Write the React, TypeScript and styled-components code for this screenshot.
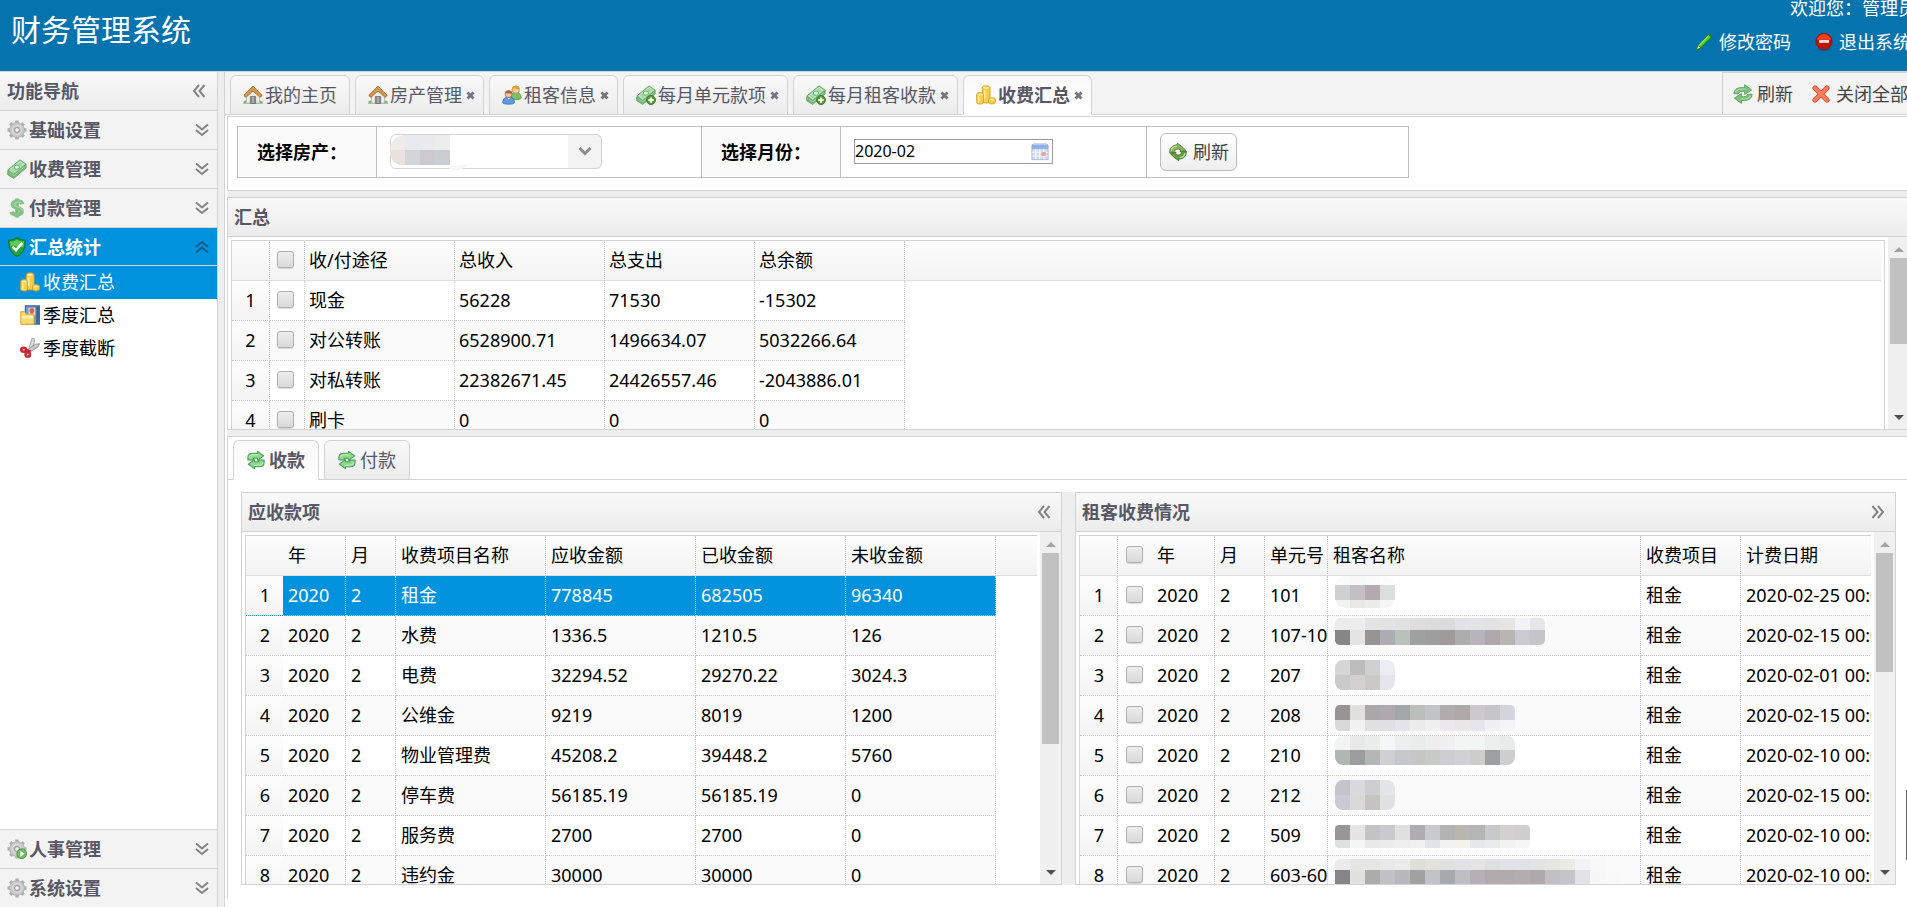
import React from 'react';
import styled, { createGlobalStyle, css } from 'styled-components';

const LINE = '#d3d3d3';
const BAR = 'linear-gradient(#f9f9f9, #ececec)';
const INK = '#575765';
const BLUE = '#0092dc';

const GlobalStyle = createGlobalStyle`
  * { box-sizing: border-box; }
  html, body { margin: 0; height: 100%; overflow: hidden; }
  body, button, input, select {
    font-family: 'Noto Sans', 'Noto Sans CJK SC', sans-serif;
    font-size: 18px;
    line-height: 24px;
    color: #000;
  }
  #root { height: 100%; }
`;

/* ---------- icons ---------- */

type IconName =
  | 'home' | 'users' | 'money' | 'moneyAdd' | 'coins' | 'gear' | 'gearPlay' | 'dollar'
  | 'shield' | 'album' | 'scissors' | 'reload' | 'recycle' | 'sync' | 'cancel'
  | 'pencil' | 'stop' | 'calendar';

const Gear = () => (
  <>
    <g stroke="#b0b0b0" strokeWidth="2.8">
      {[0, 45, 90, 135].map((a) => (
        <path key={a} d="M8 .4V15.600" transform={`rotate(${a} 8 8)`} />
      ))}
    </g>
    <circle cx="8" cy="8" r="5.900" fill="#cbcbcb" stroke="#a9a9a9" strokeWidth=".6" />
    <circle cx="8" cy="8" r="3.500" fill="#bdbdbd" stroke="#dedede" strokeWidth="1" />
    <circle cx="8" cy="8" r="1.900" fill="#f3f3f3" stroke="#999" strokeWidth=".8" />
  </>
);

const Note = () => (
  <>
    <path d="M.6 9.400v3.200l4.800 2.900 9.900-8.300V4.100z" fill="#79b97d" stroke="#62a769" strokeWidth=".7" />
    <path d="M.6 8.800 10.400.7l4.900 3.400-9.900 8.300z" fill="#a3d6a3" stroke="#62a769" strokeWidth=".8" />
    <path d="M2.400 8.800 10.500 2.100l2.900 2-8.100 6.800z" fill="none" stroke="#c9eac8" strokeWidth=".8" />
    <ellipse cx="7.900" cy="6.500" rx="2.100" ry="1.700" fill="#dcf3da" stroke="#62a769" strokeWidth=".7" />
    <path d="M2.500 11.500 5.500 13.400 14 6.400" fill="none" stroke="#a9d8a9" strokeWidth=".7" />
  </>
);

const drawings: Record<IconName, React.ReactNode> = {
  home: (
    <>
      <path d="M.3 13.200c2-1.600 13.400-1.600 15.400 0v1.800H.3z" fill="#7dbb5f" />
      <path d="M2.800 8 8 3l5.200 5v6.500H2.800z" fill="#ececec" stroke="#b3b3b3" strokeWidth=".7" />
      <path d="M5.900 9.200h4.200v5.600H5.900z" fill="#8b8b8b" stroke="#6d6d6d" strokeWidth=".6" />
      <path d="M8 9.400v5" stroke="#c9c9c9" strokeWidth=".8" />
      <path d="M.6 8.300 8 1l7.400 7.300-1.700 1.500L8 4.800 2.300 9.800z" fill="#d49a4c" stroke="#a56f2c" strokeWidth=".8" strokeLinejoin="round" />
    </>
  ),
  users: (
    <>
      <path d="M7 10.500c0-3.500 1.500-4.500 4-4.500s4.300 1.200 4.300 4.300c0 .9-2 1.400-4.300 1.400z" fill="#7cc265" stroke="#569a44" strokeWidth=".7" />
      <circle cx="11" cy="3.700" r="2.900" fill="#f7cfa4" stroke="#c98b3c" strokeWidth=".7" />
      <path d="M8 3.300C8.200.2 13.800.2 14 3.300c-2 .2-4-.8-6 0z" fill="#e6a021" />
      <path d="M.7 14.200c0-3.500 1.800-4.700 4.600-4.700s4.600 1.200 4.600 4.700c0 1.500-9.200 1.500-9.200 0z" fill="#5e9be0" stroke="#3971bd" strokeWidth=".7" />
      <path d="M4 10l1.400 1.600L6.800 10z" fill="#fff" />
      <circle cx="5.300" cy="7.200" r="2.800" fill="#f5c9a0" stroke="#a7683f" strokeWidth=".7" />
      <path d="M2.400 7C2.500 3.700 8.100 3.700 8.200 7c-2 0-3.800-1-5.800 0z" fill="#a8593a" />
    </>
  ),
  money: <Note />,
  moneyAdd: (
    <>
      <Note />
      <circle cx="12" cy="12" r="3.600" fill="#5d9a3c" stroke="#3f7a25" strokeWidth=".8" />
      <path d="M12 9.900v4.200M9.900 12h4.200" stroke="#fff" strokeWidth="1.500" />
    </>
  ),
  coins: (
    <>
      <g fill="#f6cf4c" stroke="#dba01c" strokeWidth=".8">
        <path d="M5 2.200c0-2 6.200-2 6.200 0V13c0 1.800-6.200 1.800-6.200 0z" />
        <path d="M.6 7.400c0-1.700 5.400-1.700 5.400 0v6.400c0 1.900-5.400 1.900-5.400 0z" />
        <path d="M10 11.400c0-1.500 5.500-1.500 5.500 0v2.200c0 2-5.500 2-5.500 0z" />
      </g>
      <g fill="#fdeea6">
        <ellipse cx="8.100" cy="2.200" rx="2.300" ry=".9" />
        <ellipse cx="3.300" cy="7.500" rx="2" ry=".8" />
        <ellipse cx="12.700" cy="11.500" rx="2" ry=".7" />
        <path d="M1.500 9h1.300v5H1.500zM6.300 4.200h1.200v7H6.300z" />
      </g>
    </>
  ),
  gear: <Gear />,
  gearPlay: (
    <>
      <Gear />
      <circle cx="11.800" cy="11.800" r="3.900" fill="#74bd68" stroke="#4b9343" strokeWidth=".8" />
      <path d="M10.700 9.500 14 11.800l-3.300 2.300z" fill="#fff" />
    </>
  ),
  dollar: (
    <>
      <path d="M8 .3v15.400" stroke="#82bd80" strokeWidth="2.800" />
      <path d="M12.300 5C11.500 1.900 4.600 2 4.600 5.200c0 3.300 7.200 1.900 7.200 5.500 0 3.400-7.300 3.400-8.100.3" fill="none" stroke="#86c285" strokeWidth="3.400" />
      <path d="M11.500 4.200C10 2.700 5.500 3 5.500 5.200c0 2.300 7.200 1.900 7.200 5.500" fill="none" stroke="#b2deae" strokeWidth=".8" />
    </>
  ),
  shield: (
    <>
      <path d="M8 .6c2 1.700 4.300 2.100 6.600 2 .4 6.200-1.500 10.300-6.600 12.900C2.900 12.900 1 8.800 1.400 2.600 3.700 2.700 6 2.300 8 .6z" fill="#20a73a" stroke="#0d7a2c" strokeWidth=".9" />
      <path d="M8 1.900c1.800 1.300 3.600 1.700 5.500 1.700.1 2-.1 3.500-.5 4.800L2.900 6.700 2.500 3.600C4.400 3.600 6.200 3.200 8 1.900z" fill="#5ccc59" />
      <path d="M4.300 7.700 7.200 10.600 12.200 4.600" fill="none" stroke="#fff" strokeWidth="2" />
    </>
  ),
  album: (
    <>
      <path d="M4.300.7h11.200v14.600H4.300z" fill="#6f9bd1" stroke="#3c6399" strokeWidth=".9" />
      <path d="M13 1.200h2v13.600h-2z" fill="#40618f" />
      <path d="M6.800 2.300h5.400v6H6.800z" fill="#c9dbef" />
      <path d="M7.600 3.600C8 2.300 11 2.300 11.400 3.600c.3 2-1 3-1.900 3.900-.9-.9-2.200-1.900-1.900-3.900z" fill="#ec5a51" />
      <path d="M.6 5.300h3.200l1 2h6.400v8.100H.6z" fill="#f8d96e" stroke="#d7a83a" strokeWidth=".8" />
      <path d="M1.400 8.600h9v2.200h-9z" fill="#fdf1ba" />
    </>
  ),
  scissors: (
    <>
      <path d="M6.600 10.400 9.500.5h1.900v3.200L9.300 10z" fill="#dedede" stroke="#979797" strokeWidth=".7" />
      <path d="M6.200 9.300 12.300 5l3.300-.5-.9 2.300-6.900 4.600z" fill="#c9c9c9" stroke="#8f8f8f" strokeWidth=".7" />
      <ellipse cx="2.900" cy="9.300" rx="2" ry="1.600" fill="#f2c7c7" stroke="#cb2a35" strokeWidth="2" />
      <ellipse cx="6.200" cy="13.200" rx="1.800" ry="1.800" fill="#f2c7c7" stroke="#cb2a35" strokeWidth="2" />
      <path d="M4.800 9.600 7.800 10.200 6.800 11.600" stroke="#b3232d" strokeWidth="1.400" />
    </>
  ),
  reload: (
    <>
      <path d="M.7 7.800C1 3.900 4 2.300 9.300 3V.5L15 4.700 9.300 8.400V6C6.500 5.500 4.800 6 4.200 7.800z" fill="#79c07a" stroke="#5a9f60" strokeWidth=".7" />
      <path d="M15.300 8.200C15 12.100 12 13.700 6.700 13v2.500L1 11.300l5.700-3.700V10c2.800.5 4.500 0 5.100-1.800z" fill="#79c07a" stroke="#5a9f60" strokeWidth=".7" />
      <path d="M2 6.700C3 4.200 6 3.600 10 4.200M14 9.300c-1 2.500-4 3.100-8 2.500" fill="none" stroke="#b3dfae" strokeWidth=".9" />
    </>
  ),
  recycle: (
    <>
      <g id="recycle-arm">
        <path d="M.6 8.600C.4 4.300 3.200 1.700 7.200 1.700L7.400.3l4 2.800L15 6.700l-5.400 1 .3-1.700C7.500 4.600 5 5.400 5 8.300z" fill="#86b25e" stroke="#4f7f31" strokeWidth=".8" strokeLinejoin="round" />
      </g>
      <path d="M15.400 7.400c.2 4.300-2.600 6.900-6.600 6.900l-.2 1.400-4-2.800L1 9.300l5.400-1L6.100 10c2.400 1.400 4.900.6 4.900-2.300z" fill="#6a9c45" stroke="#46752b" strokeWidth=".8" strokeLinejoin="round" />
      <path d="M2 7c.2-2.300 2.200-4 5-4M9.500 13c2.500-.1 4.300-1.500 4.500-4" fill="none" stroke="#c3dfa8" strokeWidth="1" />
      <path d="M6.600 9.300 9.500 6.600" stroke="#f4f8ef" strokeWidth="1.200" />
    </>
  ),
  sync: (
    <>
      <path d="M.8 7.900V5.500C.8 3 2.600 1.900 5.500 1.900h3.800V.3l5.600 4-5.600 4V6.400H6.600c-1.200 0-1.400.8-.6 1.700z" fill="#86dc82" stroke="#4f9565" strokeWidth=".9" strokeLinejoin="round" />
      <path d="M15.200 8.100v2.400c0 2.500-1.800 3.600-4.700 3.600H6.700v1.600l-5.600-4 5.600-4v1.900h2.700c1.200 0 1.400-.8.600-1.700z" fill="#86dc82" stroke="#4f9565" strokeWidth=".9" strokeLinejoin="round" />
      <path d="M2.200 5.800c.2-2 1.600-2.500 4-2.500h4M13.800 10.200c-.2 2-1.600 2.500-4 2.500h-4" fill="none" stroke="#c6f5be" strokeWidth=".9" />
    </>
  ),
  cancel: (
    <>
      <path d="M2.700 2.700 13.300 13.300M13.300 2.700 2.700 13.300" stroke="#e04b2f" strokeWidth="4.600" strokeLinecap="round" />
      <path d="M2.700 2.700 13.300 13.300M13.300 2.700 2.700 13.300" stroke="#fb7d5e" strokeWidth="3" strokeLinecap="round" />
    </>
  ),
  pencil: (
    <>
      <path d="M.3 15.700 2.300 11 12 1.300C13.500-.2 16.300 2.500 14.800 4L5 13.800z" fill="#1f7d12" />
      <path d="M3.600 11.200 12.500 2.300 14 3.800 5 12.700z" fill="#52d022" />
      <path d="M3.400 11.300 12.200 2.400" stroke="#a6f07a" strokeWidth="1" />
      <path d="M1.700 14.300 2.900 11.500 4.700 13.200z" fill="#f4f0c8" />
    </>
  ),
  stop: (
    <>
      <ellipse cx="8" cy="14.600" rx="6" ry="1.300" fill="#0b4f7c" opacity=".6" />
      <circle cx="8" cy="7.500" r="7.200" fill="#c41407" stroke="#7c1a14" strokeWidth=".8" />
      <path d="M1.800 6C2.500 3 5 1.200 8 1.200S13.500 3 14.200 6z" fill="#f03c20" />
      <path d="M3.600 6.200h8.800v2.600H3.600z" fill="#f3dcd8" />
    </>
  ),
  calendar: (
    <>
      <path d="M.8 1.800 2 .8h12l1.200 1v13H.8z" fill="#cfdaf0" stroke="#a9b8d3" strokeWidth=".8" />
      <path d="M.8 1.700h14.400v3.500H.8z" fill="#8fadea" />
      <path d="M1 8.200h14M1 11.500h14M4.300 5.500v9M7.800 5.500v9M11.300 5.500v9" stroke="#f7fafe" strokeWidth="1" />
      <path d="M9.200 8h3.800v3.600H9.200z" fill="#eea498" />
    </>
  ),
};

const Svg = styled.svg<{ $size: number }>`
  width: ${(p) => p.$size}px;
  height: ${(p) => p.$size}px;
  flex: none;
  display: block;
`;

const Icon = ({ name, size = 20 }: { name: IconName; size?: number }) => (
  <Svg $size={size} viewBox="0 0 16 16" fill="none" aria-hidden="true">
    {drawings[name]}
  </Svg>
);

type Dir = 'left' | 'right' | 'up' | 'down';
const turn: Record<Dir, number> = { left: 0, up: 90, right: 180, down: 270 };

const Chevrons = ({ dir, color = '#848484' }: { dir: Dir; color?: string }) => (
  <Svg $size={14} viewBox="0 0 14 14" fill="none" aria-hidden="true">
    <path
      d="M7 1 2 7 7 13M12.500 1 7.500 7l5 6"
      stroke={color}
      strokeWidth="2"
      transform={`rotate(${turn[dir]} 7 7)`}
    />
  </Svg>
);

/* ---------- page frame ---------- */

const Window = styled.div`
  position: relative;
  height: 100vh;
  overflow: hidden;
  background: #fff;
`;

const Frame = styled.div`
  display: flex;
  flex-direction: column;
  height: 100%;
  margin-right: -2px;
`;

const EdgeMark = styled.div`
  position: absolute;
  right: 0;
  bottom: 47px;
  width: 1px;
  height: 70px;
  background: #666;
`;

const Header = styled.header`
  flex: none;
  display: flex;
  justify-content: space-between;
  height: 72px;
  background: #0573ae;
  border-bottom: 1px solid ${LINE};
  color: #fff;
`;

const Title = styled.h1`
  margin: 0;
  padding: 10px 0 0 11px;
  font-size: 30px;
  line-height: 40px;
  font-weight: 400;
`;

const Account = styled.div`
  flex: none;
  width: 214px;
  white-space: nowrap;
`;

const Welcome = styled.div`
  padding-left: 95px;
  height: 30px;
  line-height: 16px;
`;

const Links = styled.nav`
  display: flex;
  gap: 24px;
`;

const HeaderLink = styled.a`
  display: flex;
  align-items: center;
  gap: 6px;
  flex: none;
  color: #fff;
  text-decoration: none;
`;

const Body = styled.div`
  flex: 1;
  min-height: 0;
  display: flex;
`;

/* ---------- sidebar ---------- */

const Sidebar = styled.aside`
  flex: none;
  width: 218px;
  display: flex;
  flex-direction: column;
  border-right: 1px solid ${LINE};
`;

const Splitter = styled.div`
  flex: none;
  width: 6px;
  background: #eee;
`;

const barStyle = css`
  flex: none;
  display: flex;
  align-items: center;
  justify-content: space-between;
  height: 39px;
  font-size: 18px;
  font-weight: 700;
  color: ${INK};
  border-bottom: 1px solid ${LINE};
`;

const NavTitle = styled.div`
  ${barStyle}
  padding: 0 11px 0 7px;
  background: ${BAR};
`;

const Section = styled.button<{ $open?: boolean; $above?: boolean }>`
  ${barStyle}
  width: 100%;
  padding: 0 8px 0 7px;
  border: 0 solid ${LINE};
  border-bottom-width: ${(p) => (p.$above ? 0 : 1)}px;
  border-top-width: ${(p) => (p.$above ? 1 : 0)}px;
  background: #f3f3f3;
  cursor: pointer;
  ${(p) => p.$open && css`height: 38px; background: ${BLUE}; color: #fff;`}
`;

const Caption = styled.span`
  display: flex;
  align-items: center;
  gap: 2px;
`;

const Tree = styled.ul`
  flex: 1;
  margin: 0;
  padding: 0;
  list-style: none;
`;

const Leaf = styled.a<{ $on?: boolean }>`
  display: flex;
  align-items: center;
  gap: 3px;
  height: 33px;
  padding: 0 0 2px 20px;
  text-decoration: none;
  color: ${(p) => (p.$on ? '#fff' : '#000')};
  background: ${(p) => (p.$on ? BLUE : 'transparent')};
`;

/* ---------- tabs ---------- */

const Main = styled.main`
  flex: 1;
  min-width: 0;
  display: flex;
  flex-direction: column;
  border-left: 1px solid ${LINE};
`;

const TabStrip = styled.div<{ $plain?: boolean }>`
  flex: none;
  display: flex;
  align-items: flex-end;
  height: 43px;
  padding-left: 5px;
  background: ${(p) => (p.$plain ? '#fff' : '#f3f3f3')};
  box-shadow: inset 0 -1px ${LINE};
`;

const TabList = styled.div`
  flex: 1;
  display: flex;
  gap: 5px;
`;

const Tab = styled.div<{ $on?: boolean; $pad?: number }>`
  display: flex;
  align-items: center;
  gap: 4px;
  height: 40px;
  padding: 0 ${(p) => p.$pad ?? 12}px;
  border: 1px solid ${LINE};
  border-radius: 6px 6px 0 0;
  background: ${BAR};
  ${(p) =>
    p.$on &&
    css`
      background: linear-gradient(#f9f9f9, #fff);
      border-bottom-color: #fff;
    `}
`;

const TabButton = styled.button<{ $on?: boolean; $gap?: number }>`
  display: flex;
  align-items: center;
  gap: ${(p) => p.$gap ?? 2}px;
  padding: 0;
  border: 0;
  background: none;
  color: ${INK};
  font-weight: ${(p) => (p.$on ? 700 : 400)};
  white-space: nowrap;
  cursor: pointer;
`;

const CloseButton = styled.button`
  display: block;
  padding: 0;
  margin-right: -4px;
  border: 0;
  background: none;
  cursor: pointer;
`;

const TabTools = styled.div`
  flex: none;
  align-self: stretch;
  display: flex;
  align-items: center;
  gap: 19px;
  width: 187px;
  padding-left: 10px;
  border: 1px solid ${LINE};
`;

const ToolButton = styled.button<{ $gap: number }>`
  display: flex;
  align-items: center;
  gap: ${(p) => p.$gap}px;
  flex: none;
  padding: 0;
  border: 0;
  background: none;
  color: #444;
  white-space: nowrap;
  cursor: pointer;
`;

const Page = styled.div`
  flex: 1;
  min-height: 0;
  display: flex;
  flex-direction: column;
  padding: 1px 0 8px 2px;
`;

/* ---------- filter form ---------- */

const FilterPanel = styled.section`
  flex: none;
  height: 75px;
  padding: 9px;
  border: 1px solid ${LINE};
`;

const FilterForm = styled.form`
  display: grid;
  grid-template-columns: 138px 325px 139px 306px 262px;
  width: max-content;
  height: 52px;
  border: 1px solid #bfbfbf;
`;

const FilterLabel = styled.label`
  display: flex;
  align-items: center;
  padding-left: 19px;
  background: #fafafa;
  font-weight: 700;
  & + div { border-left: 1px solid #bfbfbf; }
  div + & { border-left: 1px solid #bfbfbf; }
`;

const FilterCell = styled.div`
  display: flex;
  align-items: center;
  padding: 0 0 1px 13px;
  & + & { border-left: 1px solid #bfbfbf; }
`;

const SelectBox = styled.div`
  position: relative;
  width: 212px;
  height: 35px;
`;

const Select = styled.select`
  appearance: none;
  width: 100%;
  height: 100%;
  border: 1px solid ${LINE};
  border-radius: 6px;
  background: linear-gradient(to left, #f3f3f3 33px, #fff 33px);
`;

const SelectArrow = styled.svg`
  position: absolute;
  right: 10px;
  top: 12px;
  width: 14px;
  height: 10px;
  pointer-events: none;
`;

const SelectMask = styled.svg`
  position: absolute;
  left: 0;
  top: 1px;
  width: 80px;
  height: 36px;
  pointer-events: none;
`;

const MonthBox = styled.div`
  display: flex;
  align-items: center;
  width: 199px;
  height: 25px;
  padding-right: 3px;
  border: 1px solid #999;
`;

const MonthInput = styled.input`
  flex: 1;
  min-width: 0;
  height: 100%;
  padding: 0 0 2px;
  border: 0;
  outline: 0;
  background: none;
  font-size: 16px;
`;

const RefreshButton = styled.button`
  display: flex;
  align-items: center;
  gap: 6px;
  height: 38px;
  padding: 0 7px 0 8px;
  border: 1px solid #bbb;
  border-radius: 6px;
  background: linear-gradient(#fff, #eee);
  color: #444;
  cursor: pointer;
`;

/* ---------- panels ---------- */

const HSplit = styled.div`
  flex: none;
  height: 6px;
  background: #eee;
`;

const PanelTitle = styled.h2`
  ${barStyle}
  height: 39px;
  margin: 0;
  padding: 0 10px 0 6px;
  background: ${BAR};
`;

const SummaryPanel = styled.section`
  flex: none;
  display: flex;
  flex-direction: column;
  height: 233px;
  border: 1px solid ${LINE};
  border-right: 0;
`;

const PanelBody = styled.div`
  flex: 1;
  min-height: 0;
  display: flex;
`;

const GridBox = styled.div<{ $closed?: boolean }>`
  flex: 1;
  min-width: 0;
  margin: 3px 3px 0 3px;
  overflow: hidden;
  border: solid ${LINE};
  border-width: 1px ${(p) => (p.$closed ? 1 : 0)}px 0 1px;
  padding-right: ${(p) => (p.$closed ? 3 : 0)}px;
`;

const PlainButton = styled.button`
  padding: 0;
  border: 0;
  background: none;
  cursor: pointer;
`;

const Scroll = styled.div`
  flex: none;
  display: flex;
  flex-direction: column;
  justify-content: space-between;
  width: 21px;
  background: #f0f0f0;
`;

const ScrollButton = styled.button<{ $low?: boolean }>`
  display: flex;
  align-items: center;
  justify-content: center;
  width: 21px;
  height: 21px;
  padding: ${(p) => (p.$low ? '0 0 3px' : '4px 0 0')};
  border: 0;
  background: none;
`;

const Thumb = styled.div<{ $size: number }>`
  width: 17px;
  height: ${(p) => p.$size}px;
  margin: 0 2px;
  background: #c1c1c1;
`;

const ScrollBar = ({ thumb }: { thumb: number }) => (
  <Scroll>
    <div>
      <ScrollButton type="button" aria-label="向上滚动">
        <svg width="10" height="5" viewBox="0 0 10 5"><path d="M0 5 5 0l5 5z" fill="#a3a3a3" /></svg>
      </ScrollButton>
      <Thumb $size={thumb} />
    </div>
    <ScrollButton type="button" $low aria-label="向下滚动">
      <svg width="10" height="5" viewBox="0 0 10 5"><path d="M0 0h10L5 5z" fill="#505050" /></svg>
    </ScrollButton>
  </Scroll>
);

/* ---------- data grid ---------- */

const DataTable = styled.table<{ $width?: number; $indent: number }>`
  --indent: ${(p) => p.$indent}px;
  table-layout: fixed;
  border-collapse: separate;
  border-spacing: 0;
  width: ${(p) => (p.$width ? `${p.$width}px` : '100%')};
`;

const cellStyle = css`
  height: 40px;
  padding: 0 4px 2px var(--indent);
  overflow: hidden;
  text-align: left;
  font-weight: 400;
  white-space: nowrap;
`;

const HeadCell = styled.th<{ $line?: boolean }>`
  ${cellStyle}
  background: linear-gradient(#fdfdfd, #f3f3f3);
  border-bottom: 1px solid #ddd;
  border-right: ${(p) => (p.$line === false ? 0 : '1px dotted #ccc')};
`;

const Cell = styled.td<{ $line?: boolean; $flush?: boolean }>`
  ${cellStyle}
  border-bottom: 1px dotted #ccc;
  border-right: ${(p) => (p.$line === false ? 0 : '1px dotted #ccc')};
  ${(p) => p.$flush && css`padding: 0;`}
`;

const NumberCell = styled(Cell)`
  background: linear-gradient(to bottom, #fdfdfd, #f4f4f4);
  text-align: center;
`;

const Row = styled.tr<{ $on?: boolean }>`
  &:nth-child(even) > ${Cell} { background-color: #fafafa; }
  ${(p) =>
    p.$on &&
    css`
      & > ${Cell}:not(:first-child) { background: ${BLUE}; color: #fff; }
      & > td:first-child { border-bottom-color: ${BLUE}; }
    `}
`;

const Filler = styled.td`
  padding: 0;
`;

const Check = styled.input`
  appearance: none;
  display: block;
  width: 17px;
  height: 17px;
  margin: 0 0 0 3px;
  border: 1px solid #b0b0b0;
  border-radius: 3px;
  background: linear-gradient(#ededed, #d9d9d9);
  box-shadow: 0 1px 1px rgba(0, 0, 0, 0.15);
`;

/* ---------- lower area ---------- */

const Lower = styled.section`
  flex: 1;
  min-height: 0;
  display: flex;
  flex-direction: column;
  border-left: 1px solid ${LINE};
  border-top: 1px solid ${LINE};
`;

const Columns = styled.div`
  flex: 1;
  min-height: 0;
  display: flex;
  margin: 12px 13px 14px;
  gap: 13px;
  background: #eee;
`;

const Panel = styled.section`
  flex: 1;
  min-width: 0;
  display: flex;
  flex-direction: column;
  border: 1px solid ${LINE};
  background: #fff;
`;

/* ---------- masked tenant names ---------- */

type Band = { y: number; h: number; c: string[] };
type MaskData = { r: number; bands: Band[] };

const BLOCK = 15;

const masks: MaskData[] = [
  { r: 10, bands: [
    { y: 0, h: 9, c: ['#fafafa', '#f8f8f8', '#fafafa', '#fcfcfc'] },
    { y: 9, h: 15, c: ['#cfd1d0', '#c3c0c4', '#b3abaf', '#dcdedc'] },
    { y: 24, h: 8, c: ['#f2f2f0', '#e8e8e6', '#ececea', '#f6f6f6'] },
  ] },
  { r: 5, bands: [
    { y: 2, h: 12, c: ['#ebebeb', '#ececec', '#e4e4e4', '#e3e3e3', '#e1e1e2', '#dededf', '#dcdcdd', '#dbdbdc', '#e3e3e5', '#e4e4e6', '#e3e3e4', '#e5e5e5', '#f1f2f5', '#e6e6e8'] },
    { y: 14, h: 15, c: ['#868686', '#e4e4e2', '#979593', '#afadb4', '#bac0ba', '#9fa0a1', '#9f9e9e', '#9e9b9b', '#adadad', '#b7b4bb', '#aea7ab', '#b8b5b3', '#cacbd0', '#c4c4ca'] },
  ] },
  { r: 8, bands: [
    { y: 4, h: 15, c: ['#d6d6d6', '#bebcbb', '#cfd1d0', '#eceef1'] },
    { y: 19, h: 15, c: ['#c9cac9', '#d2d1d0', '#cac9c8', '#e3e6ec'] },
  ] },
  { r: 5, bands: [
    { y: 9, h: 15, c: ['#989495', '#e0e0df', '#aaa7a8', '#aea9ac', '#a3a7a8', '#babfbc', '#c2c4c5', '#b1abae', '#aea9a8', '#cbc9cb', '#c6c6c9', '#d5d6dd'] },
    { y: 24, h: 11, c: ['#d8dad9', '#f1f1f2', '#e0e0e1', '#e0dfe1', '#e4e5e6', '#eaeeeb', '#f0f0f0', '#ebe7ea', '#e9e6e7', '#e6e5e9', '#eff0f3', '#f5f5f7'] },
  ] },
  { r: 8, bands: [
    { y: 0, h: 14, c: ['#f2f4f3', '#e8e8e8', '#ebecec', '#f5f6f6', '#edeeee', '#ebecec', '#eeeeef', '#f0f0f0', '#f3f5f4', '#f3f5f4', '#edefee', '#e9ebea'] },
    { y: 14, h: 15, c: ['#b0b6b2', '#9d9c9e', '#b4b8b5', '#d0cfd4', '#c6c7ca', '#c6c6c6', '#c8cac8', '#cdcdd2', '#d0d0d5', '#cecdca', '#9e9fa0', '#cdd0cf'] },
  ] },
  { r: 8, bands: [
    { y: 4, h: 15, c: ['#c5c4ca', '#dadadc', '#cdcecd', '#e4e5e6'] },
    { y: 19, h: 15, c: ['#c8cbd2', '#d9d9da', '#c5c3c0', '#e0e1e3'] },
  ] },
  { r: 4, bands: [
    { y: 9, h: 15, c: ['#9a9697', '#e5e5e4', '#c4c4c4', '#c8cacf', '#e0e0e0', '#b1acaf', '#c8cacf', '#b3b3b1', '#b7b6af', '#b2b6b5', '#c7c9cb', '#d2d1cd', '#d0cfce'] },
    { y: 24, h: 8, c: ['#dfe1e0', '#f4f6f5', '#e9e9e9', '#ececec', '#efeff0', '#f1f1f1', '#e2e3e8', '#f2f2f2', '#f3f3eb', '#e4e8ea', '#eaebeb', '#f2f2f2', '#f6f6f6'] },
  ] },
  { r: 5, bands: [
    { y: 3, h: 11, c: ['#ebebeb', '#e6e6e5', '#e6e6e5', '#e8e8e8', '#eaebea', '#dededb', '#e1e1de', '#e0e0df', '#e2e2e5', '#e4e4e4', '#dfdfe0', '#e1e2e3', '#e1e2e6', '#e4e4e4', '#e6e6e3', '#eaeae7', '#f2f3f7', '#f8f8f8', '#fafafa'] },
    { y: 14, h: 20, c: ['#868487', '#e1e2df', '#adada7', '#bfc1c6', '#b9b9bb', '#9fa2a0', '#c2c3c7', '#a6aaad', '#bebfc3', '#b4b0b3', '#b1abad', '#b0abac', '#b3adae', '#afa9ab', '#c1c1c5', '#c5c5c7', '#e2e2e8', '#f7f7f7', '#f9f9f9'] },
  ] },
];

const MaskSvg = styled.svg`
  display: block;
  width: 290px;
  height: 39px;
  margin-left: 7px;
`;

const Mask = ({ index }: { index: number }) => {
  const { r, bands } = masks[index];
  const top = bands[0].y;
  const last = bands[bands.length - 1];
  const id = `mask-${index}`;
  return (
    <MaskSvg role="img" aria-label="已遮盖">
      <clipPath id={id}>
        <rect x="0" y={top} width={bands[0].c.length * BLOCK} height={last.y + last.h - top} rx={r} />
      </clipPath>
      <g clipPath={`url(#${id})`} shapeRendering="crispEdges">
        {bands.map((b) =>
          b.c.map((c, i) => <rect key={`${b.y}-${i}`} x={i * BLOCK} y={b.y} width={BLOCK} height={b.h} fill={c} />),
        )}
      </g>
    </MaskSvg>
  );
};

/* ---------- data ---------- */

const topSections: { icon: IconName; text: string; open?: boolean }[] = [
  { icon: 'gear', text: '基础设置' },
  { icon: 'money', text: '收费管理' },
  { icon: 'dollar', text: '付款管理' },
  { icon: 'shield', text: '汇总统计', open: true },
];

const leaves: { icon: IconName; text: string; on?: boolean }[] = [
  { icon: 'coins', text: '收费汇总', on: true },
  { icon: 'album', text: '季度汇总' },
  { icon: 'scissors', text: '季度截断' },
];

const tabs: { icon: IconName; text: string; fixed?: boolean; on?: boolean }[] = [
  { icon: 'home', text: '我的主页', fixed: true },
  { icon: 'home', text: '房产管理' },
  { icon: 'users', text: '租客信息' },
  { icon: 'moneyAdd', text: '每月单元款项' },
  { icon: 'moneyAdd', text: '每月租客收款' },
  { icon: 'coins', text: '收费汇总', on: true },
];

const summary = [
  ['现金', '56228', '71530', '-15302'],
  ['对公转账', '6528900.71', '1496634.07', '5032266.64'],
  ['对私转账', '22382671.45', '24426557.46', '-2043886.01'],
  ['刷卡', '0', '0', '0'],
];

const receivable = [
  ['租金', '778845', '682505', '96340'],
  ['水费', '1336.5', '1210.5', '126'],
  ['电费', '32294.52', '29270.22', '3024.3'],
  ['公维金', '9219', '8019', '1200'],
  ['物业管理费', '45208.2', '39448.2', '5760'],
  ['停车费', '56185.19', '56185.19', '0'],
  ['服务费', '2700', '2700', '0'],
  ['违约金', '30000', '30000', '0'],
];

const tenants = [
  ['101', '2020-02-25 00:00:00'],
  ['107-108', '2020-02-15 00:00:00'],
  ['207', '2020-02-01 00:00:00'],
  ['208', '2020-02-15 00:00:00'],
  ['210', '2020-02-10 00:00:00'],
  ['212', '2020-02-15 00:00:00'],
  ['509', '2020-02-10 00:00:00'],
  ['603-605', '2020-02-10 00:00:00'],
];

const Cols = ({ widths, fill }: { widths: number[]; fill?: boolean }) => (
  <colgroup>
    {widths.map((w, i) => <col key={i} width={w} />)}
    {fill && <col />}
  </colgroup>
);

const SummaryTable = () => (
  <DataTable $indent={4}>
    <Cols widths={[38, 35, 150, 150, 150, 150]} fill />
    <thead>
      <tr>
        <HeadCell />
        <HeadCell><Check type="checkbox" aria-label="全选" /></HeadCell>
        {['收/付途径', '总收入', '总支出', '总余额'].map((t) => <HeadCell key={t} scope="col">{t}</HeadCell>)}
        <HeadCell $line={false} />
      </tr>
    </thead>
    <tbody>
      {summary.map((row, i) => (
        <Row key={row[0]}>
          <NumberCell>{i + 1}</NumberCell>
          <Cell><Check type="checkbox" aria-label={`选择${row[0]}`} /></Cell>
          {row.map((v, j) => <Cell key={j}>{v}</Cell>)}
          <Filler />
        </Row>
      ))}
    </tbody>
  </DataTable>
);

const ReceivableTable = () => (
  <DataTable $indent={5}>
    <Cols widths={[37, 63, 50, 150, 150, 150, 150]} fill />
    <thead>
      <tr>
        <HeadCell $line={false} />
        {['年', '月', '收费项目名称', '应收金额', '已收金额', '未收金额'].map((t) => (
          <HeadCell key={t} scope="col">{t}</HeadCell>
        ))}
        <HeadCell $line={false} />
      </tr>
    </thead>
    <tbody>
      {receivable.map((row, i) => (
        <Row key={row[0]} $on={i === 0}>
          <NumberCell $line={false}>{i + 1}</NumberCell>
          <Cell>2020</Cell>
          <Cell>2</Cell>
          {row.map((v, j) => <Cell key={j}>{v}</Cell>)}
          <Filler />
        </Row>
      ))}
    </tbody>
  </DataTable>
);

const TenantTable = () => (
  <DataTable $width={1000} $indent={5}>
    <Cols widths={[38, 34, 63, 50, 63, 313, 100, 339]} />
    <thead>
      <tr>
        <HeadCell />
        <HeadCell $line={false}><Check type="checkbox" aria-label="全选" /></HeadCell>
        {['年', '月', '单元号', '租客名称', '收费项目', '计费日期'].map((t) => (
          <HeadCell key={t} scope="col">{t}</HeadCell>
        ))}
      </tr>
    </thead>
    <tbody>
      {tenants.map(([unit, date], i) => (
        <Row key={unit}>
          <NumberCell>{i + 1}</NumberCell>
          <Cell $line={false}><Check type="checkbox" aria-label={`选择${unit}`} /></Cell>
          <Cell>2020</Cell>
          <Cell>2</Cell>
          <Cell>{unit}</Cell>
          <Cell $flush><Mask index={i} /></Cell>
          <Cell>租金</Cell>
          <Cell>{date}</Cell>
        </Row>
      ))}
    </tbody>
  </DataTable>
);

const App = () => (
  <Window lang="zh-CN">
    <GlobalStyle />
    <Frame>
      <Header>
        <Title>财务管理系统</Title>
        <Account>
          <Welcome>欢迎您：管理员</Welcome>
          <Links>
            <HeaderLink href="#password"><Icon name="pencil" size={18} />修改密码</HeaderLink>
            <HeaderLink href="#logout"><Icon name="stop" size={18} />退出系统</HeaderLink>
          </Links>
        </Account>
      </Header>
      <Body>
        <Sidebar>
          <NavTitle>
            功能导航
            <PlainButton type="button" aria-label="收起导航"><Chevrons dir="left" /></PlainButton>
          </NavTitle>
          {topSections.map((s) => (
            <Section key={s.text} type="button" $open={s.open}>
              <Caption><Icon name={s.icon} />{s.text}</Caption>
              <Chevrons dir={s.open ? 'up' : 'down'} color={s.open ? '#17608c' : undefined} />
            </Section>
          ))}
          <Tree>
            {leaves.map((l) => (
              <li key={l.text}>
                <Leaf href={`#${l.icon}`} $on={l.on}><Icon name={l.icon} />{l.text}</Leaf>
              </li>
            ))}
          </Tree>
          <Section type="button" $above>
            <Caption><Icon name="gearPlay" />人事管理</Caption>
            <Chevrons dir="down" />
          </Section>
          <Section type="button" $above>
            <Caption><Icon name="gear" />系统设置</Caption>
            <Chevrons dir="down" />
          </Section>
        </Sidebar>
        <Splitter />
        <Main>
          <TabStrip>
            <TabList>
              {tabs.map((t) => (
                <Tab key={t.text} $on={t.on}>
                  <TabButton type="button" $on={t.on}><Icon name={t.icon} />{t.text}</TabButton>
                  {!t.fixed && (
                    <CloseButton type="button" aria-label={`关闭${t.text}`}>
                      <svg width="9" height="9" viewBox="0 0 9 9" aria-hidden="true" display="block">
                        <path d="M1.500 1.500l6 6M7.500 1.500l-6 6" stroke="#74747f" strokeWidth="2.800" />
                      </svg>
                    </CloseButton>
                  )}
                </Tab>
              ))}
            </TabList>
            <TabTools>
              <ToolButton type="button" $gap={4}><Icon name="reload" />刷新</ToolButton>
              <ToolButton type="button" $gap={6}><Icon name="cancel" size={18} />关闭全部</ToolButton>
            </TabTools>
          </TabStrip>
          <Page>
            <FilterPanel>
              <FilterForm>
                <FilterLabel htmlFor="house">选择房产：</FilterLabel>
                <FilterCell>
                  <SelectBox>
                    <Select id="house" />
                    <SelectArrow viewBox="0 0 14 10" fill="none">
                      <path d="M1.500 2 7 7.500 12.500 2" stroke="#8a8a8a" strokeWidth="3" />
                    </SelectArrow>
                    <SelectMask viewBox="0 0 80 36">
                      <clipPath id="house-mask"><path d="M12 0H60V30H10Q0 28 0 16Q0 4 12 0z" /></clipPath>
                      <g clipPath="url(#house-mask)">
                        <rect width="15" height="15" fill="#efebe9" />
                        <rect x="15" width="30" height="15" fill="#e9eaed" />
                        <rect x="45" width="15" height="15" fill="#ededee" />
                        <rect y="15" width="15" height="15" fill="#e8e1de" />
                        <rect x="15" y="15" width="15" height="15" fill="#d2d6da" />
                        <rect x="30" y="15" width="15" height="15" fill="#cdc9d0" />
                        <rect x="45" y="15" width="15" height="15" fill="#cacecf" />
                      </g>
                      <path d="M56 32c8-1 14-2 23-3-6 7-14 8-23 3z" fill="#f7f7f7" />
                    </SelectMask>
                  </SelectBox>
                </FilterCell>
                <FilterLabel htmlFor="month">选择月份：</FilterLabel>
                <FilterCell>
                  <MonthBox>
                    <MonthInput id="month" defaultValue="2020-02" />
                    <Icon name="calendar" size={18} />
                  </MonthBox>
                </FilterCell>
                <FilterCell>
                  <RefreshButton type="button"><Icon name="recycle" size={18} />刷新</RefreshButton>
                </FilterCell>
              </FilterForm>
            </FilterPanel>
            <HSplit />
            <SummaryPanel>
              <PanelTitle>汇总</PanelTitle>
              <PanelBody>
                <GridBox $closed><SummaryTable /></GridBox>
                <ScrollBar thumb={86} />
              </PanelBody>
            </SummaryPanel>
            <HSplit />
            <Lower>
              <TabStrip $plain>
                <TabList>
                  <Tab $on $pad={13}><TabButton type="button" $on $gap={4}><Icon name="sync" size={18} />收款</TabButton></Tab>
                  <Tab $pad={13}><TabButton type="button" $gap={4}><Icon name="sync" size={18} />付款</TabButton></Tab>
                </TabList>
              </TabStrip>
              <Columns>
                <Panel>
                  <PanelTitle>
                    应收款项
                    <PlainButton type="button" aria-label="向左收起"><Chevrons dir="left" /></PlainButton>
                  </PanelTitle>
                  <PanelBody>
                    <GridBox><ReceivableTable /></GridBox>
                    <ScrollBar thumb={191} />
                  </PanelBody>
                </Panel>
                <Panel>
                  <PanelTitle>
                    租客收费情况
                    <PlainButton type="button" aria-label="向右收起"><Chevrons dir="right" /></PlainButton>
                  </PanelTitle>
                  <PanelBody>
                    <GridBox><TenantTable /></GridBox>
                    <ScrollBar thumb={119} />
                  </PanelBody>
                </Panel>
              </Columns>
            </Lower>
          </Page>
        </Main>
      </Body>
    </Frame>
    <EdgeMark />
  </Window>
);

export default App;
